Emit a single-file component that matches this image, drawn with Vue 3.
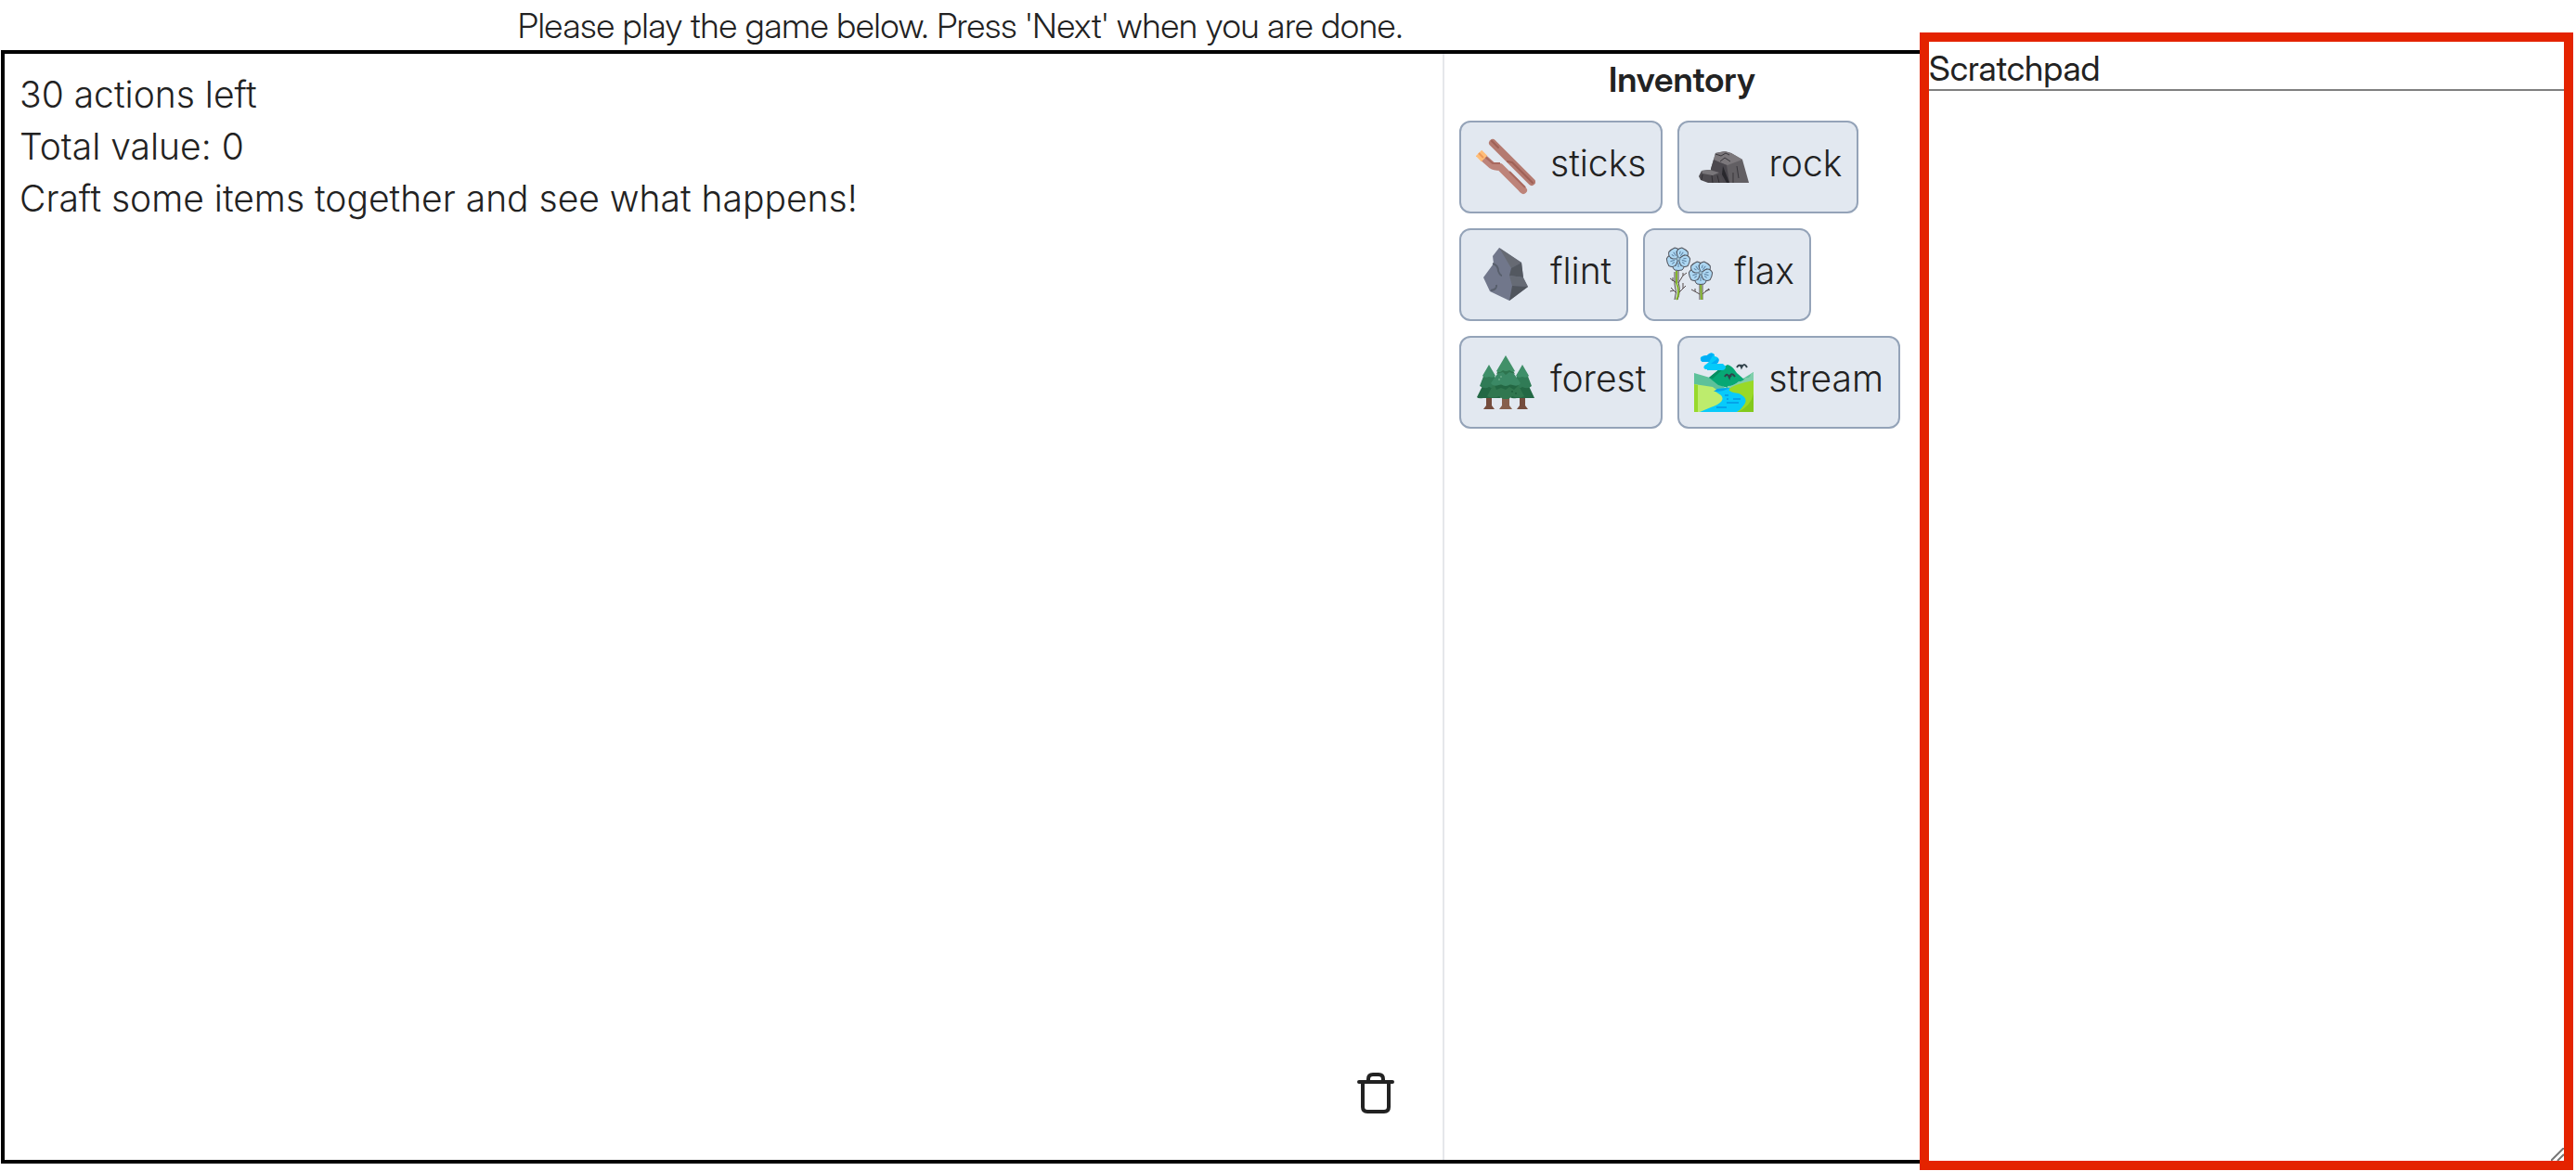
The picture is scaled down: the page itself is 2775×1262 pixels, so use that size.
<script setup>
import { ref } from 'vue'

const actionsLeft = ref(30)
const totalValue = ref(0)
const notes = ref('')
const items = ['sticks', 'rock', 'flint', 'flax', 'forest', 'stream']
const petals = [0, 72, 144, 216, 288]
</script>

<template>
  <div class="page">
    <main class="play">
      <p class="intro">Please play the game below. Press 'Next' when you are done.</p>
      <div class="game">
        <section class="canvas">
          <p>{{ actionsLeft }} actions left</p>
          <p>Total value: {{ totalValue }}</p>
          <p>Craft some items together and see what happens!</p>
          <button class="trash" type="button" aria-label="Discard item">
            <svg width="40" height="44" viewBox="0 0 40 44" fill="none" stroke="#222" stroke-width="4" stroke-linecap="round">
              <path d="M2 10H38M6 10V37Q6 42 11 42H29Q34 42 34 37V10M12 9V7Q12 2 17 2H23Q28 2 28 7V9" />
            </svg>
          </button>
        </section>
        <section class="inventory">
          <h2>Inventory</h2>
          <div class="items">
            <button v-for="item in items" :key="item" class="item" type="button">
              <svg class="icon" viewBox="0 0 64 64" aria-hidden="true">
                <g v-if="item === 'sticks'" fill="none" stroke-linejoin="round">
                  <path d="M18 6L60 48" stroke="#b47a70" stroke-width="8" stroke-linecap="round" />
                  <path d="M17 4L24 11M34 26L39 27L61 49" stroke="#9f6157" stroke-width="2" stroke-linecap="round" />
                  <path d="M8 22L17 30Q20 32 26 32L51 57" stroke="#bd8379" stroke-width="8" />
                  <path d="M50 56L51 57" stroke="#bd8379" stroke-width="8" stroke-linecap="round" />
                  <path d="M10 21L18 28H26M36 37L53 54" stroke="#a9695f" stroke-width="2" />
                  <path d="M3 17L9 23" stroke="#ffbd78" stroke-width="9" />
                  <path d="M3 17L8 22" stroke="#ed9a5c" stroke-width="2" />
                </g>
                <g v-else-if="item === 'rock'">
                  <path d="M16 49L18 34L23 17L33 15L40 17L52 24L59 49Z" fill="#625f63" />
                  <path d="M23 17L33 15L40 17L52 24L36 30L21 25Z" fill="#7b777b" />
                  <path d="M18 34L21 24L35 30L38 49H31L27 38L18 35Z" fill="#4b484e" />
                  <path d="M31 31L38 49H35L30 40Z" fill="#29282d" />
                  <path d="M23 18L29 20L34 17L38 19M28 26L33 22L39 26M46 31L48 44M42 38V49" fill="none" stroke="#38363b" stroke-width="1" />
                  <path d="M5 42L8 36L16 35L27 38L32 49H15L7 46Z" fill="#4e4b50" />
                  <path d="M8 36L16 35L27 38L20 41L9 39Z" fill="#79767a" />
                  <path d="M9 40L8 46M19 41L20 49M25 41L27 49" stroke="#302e33" stroke-width="1" />
                </g>
                <g v-else-if="item === 'flint'">
                  <path d="M25 3L49 19L51 36L56 45L36 60L15 50L8 35L19 20L18 12Z" fill="#71778b" />
                  <path d="M25 3L49 19L38 25Z" fill="#666a73" />
                  <path d="M38 25L49 19L51 35L36 33Z" fill="#535860" />
                  <path d="M36 33L51 35L56 45L39 44Z" fill="#666b75" />
                  <path d="M39 44L56 45L36 60Z" fill="#50555d" />
                  <path d="M18 20Q24 22 24 28Q26 33 28 33M22 43Q23 48 16 49" fill="none" stroke="#575e6b" stroke-width="2" />
                </g>
                <g v-else-if="item === 'flax'" fill="none">
                  <g stroke="#554a4b" stroke-width="1">
                    <path d="M20 28V40Q23 50 19 59M16 29V42Q19 51 16 59M43 41L43 59M46 42V59" />
                    <path d="M18 41L11 36M14 39V35M20 41L25 33L29 30M25 33V30M18 52L12 46M15 49L11 50M21 51L28 44M25 47V41M43 53L34 48M38 50V47M46 53L53 47M49 50L54 48" />
                  </g>
                  <path d="M18 28V41Q22 51 18 59M44 41L45 59" stroke="#83b52a" stroke-width="2" />
                  <g v-for="flower in [[20, 15], [44, 30]]" :key="flower[0]" :transform="`translate(${flower[0]} ${flower[1]})`">
                    <g v-for="angle in petals" :key="angle" :transform="`rotate(${angle})`">
                      <path d="M0 0L5 4Q8 8 4 12Q0 13 -4 12Q-8 8 -5 4Z" fill="#add7f2" stroke="#51545d" stroke-width="1" />
                      <path d="M-2 5L-3 8M0 4V9M2 5L3 8" stroke="#5d82a3" stroke-width="1" />
                    </g>
                    <circle r="2" fill="#9fbccc" stroke="#6788a0" stroke-width="1" />
                  </g>
                </g>
                <g v-else-if="item === 'forest'">
                  <path d="M11 48H17V57L20 61H8L11 57ZM47 48H53V57L56 61H44L47 57Z" fill="#754c3d" />
                  <g v-for="x in [0, 36]" :key="x" :transform="`translate(${x} 0)`">
                    <path d="M8 34L1 48Q2 50 8 49H27L20 34Z" fill="#236844" />
                    <path d="M9 23L4 36Q10 40 14 37Q20 40 24 36L19 23Z" fill="#307b56" />
                    <path d="M14 13L7 25Q9 28 14 26Q19 28 21 25Z" fill="#3f8f69" />
                  </g>
                  <path d="M28 47H36V57L39 61H25L28 57Z" fill="#87604c" />
                  <path d="M20 32L12 47Q18 50 25 47L29 50H35L39 47Q46 50 52 47L44 32Z" fill="#31774f" />
                  <path d="M20 35H46L41 40L36 37L32 40L27 38L22 40Z" fill="#236743" />
                  <path d="M25 20L16 33Q19 38 27 34Q32 38 37 34Q45 38 48 33L39 20Z" fill="#3b8965" />
                  <path d="M25 17L22 23L29 21L32 24L36 21L42 23L38 17Z" fill="#2e744e" />
                  <path d="M32 3L22 20Q25 23 29 19Q32 21 36 19Q40 22 42 20Z" fill="#419068" />
                  <circle cx="25" cy="29" r="1" fill="#6daa89" /><circle cx="27" cy="26" r="1" fill="#6daa89" />
                  <circle cx="39" cy="42" r="1" fill="#205e3d" /><circle cx="43" cy="44" r="1" fill="#205e3d" />
                </g>
                <g v-else>
                  <path d="M0 22L17 27L35 39L64 21V64H0Z" fill="#5dc19a" />
                  <path d="M16 27L27 18L36 13Q41 14 46 22L54 29L46 33L36 38L26 35Z" fill="#07a875" />
                  <path d="M16 27L27 18L33 16L20 28Z" fill="#078e60" />
                  <path d="M36 36Q43 36 48 31Q53 32 55 27Q61 28 61 23L64 21V36L35 45Z" fill="#81cfaa" />
                  <path d="M0 34L20 37L35 48L29 64H0Z" fill="#bdec6d" />
                  <path d="M0 34L4 35V64H0Z" fill="#98d92b" />
                  <path d="M36 40Q43 34 64 30V64H45Z" fill="#99d927" />
                  <path d="M64 44V64H47Q61 58 64 44Z" fill="#83c91c" />
                  <path d="M25 39L39 38Q34 42 48 44Q59 49 54 56Q51 61 46 64H6L18 59Q35 53 29 46L23 42Z" fill="#08cafa" />
                  <path d="M23 42Q32 42 38 38L25 39L21 42Z" fill="#05a3e9" />
                  <path d="M24 59H35M35 54H48M42 50H50M35 50H37M33 46H37" fill="none" stroke="#05a3e9" stroke-width="2" />
                  <path d="M14 18Q9 18 11 14Q14 12 16 10H9Q6 9 7 5Q9 3 14 3Q18-2 22 2L22 4Q28 5 26 10L24 12H31L34 15Q34 19 30 19H14Z" fill="#05cafa" />
                  <path d="M9 10Q6 8 8 5Q11 3 14 3Q18-1 21 2L19 5L16 10ZM26 6Q28 10 24 12H18Z" fill="#00aef6" />
                  <path d="M33 26Q35 22 37 25L38 27Q40 20 44 26M38 24L40 26M46 16Q49 11 51 16Q54 10 57 16M50 13L52 16" fill="none" stroke="#31424b" stroke-width="2" />
                </g>
              </svg>
              <span>{{ item }}</span>
            </button>
          </div>
        </section>
      </div>
    </main>
    <aside class="scratchpad">
      <label for="notes">Scratchpad</label>
      <textarea id="notes" v-model="notes"></textarea>
      <svg class="grip" viewBox="0 0 14 14" fill="none" stroke="#777" stroke-width="2" aria-hidden="true">
        <path d="M0 14L14 0M7 14L14 7" />
      </svg>
    </aside>
  </div>
</template>

<style>
body {
  margin: 0;
  background: #fff;
}
</style>

<style scoped>
.page {
  box-sizing: border-box;
  display: flex;
  min-height: 100vh;
  padding: 0 3px 0 1px;
  color: #222;
  font-family: Inter, "Liberation Sans", sans-serif;
  font-size: 39px;
  font-weight: 300;
  line-height: 56px;
}

p,
h2 {
  margin: 0;
}

.intro,
h2,
label {
  font-family: "Inter Display", Inter, "Liberation Sans", sans-serif;
  font-size: 37px;
}

.play {
  display: flex;
  flex: 1;
  flex-direction: column;
  min-width: 0;
  padding-bottom: 8px;
}

.intro {
  height: 54px;
  text-align: center;
}

.game {
  display: flex;
  flex: 1;
  border: 4px solid #000;
  border-right: 0;
}

.canvas {
  display: flex;
  flex: 1;
  flex-direction: column;
  padding: 16px;
}

.trash {
  align-self: flex-end;
  margin: auto 36px 34px 0;
  padding: 0;
  border: 0;
  background: none;
  line-height: 0;
}

.inventory {
  box-sizing: border-box;
  flex: 0 0 514px;
  padding: 0 16px;
  border-left: 2px solid #e5e7eb;
}

h2 {
  font-weight: 600;
  text-align: center;
}

.items {
  display: flex;
  flex-wrap: wrap;
  gap: 16px;
  padding-top: 16px;
}

.item {
  display: flex;
  align-items: center;
  gap: 16px;
  padding: 16px;
  border: 2px solid #94a3b8;
  border-radius: 12px;
  background: #e2e8f0;
  color: inherit;
  font: inherit;
}

.item span {
  padding-bottom: 8px;
}

.icon {
  width: 64px;
  height: 64px;
}

.scratchpad {
  position: relative;
  box-sizing: border-box;
  display: flex;
  flex: 0 0 704px;
  flex-direction: column;
  margin: 35px 0 1px;
  border: 10px solid #e42300;
}

label {
  padding-top: 7px;
  font-weight: 400;
  line-height: 44px;
}

textarea {
  box-sizing: border-box;
  flex: 1;
  width: 100%;
  padding: 8px;
  border: 0;
  border-top: 2px solid #808080;
  outline: 0;
  background: #fff;
  color: inherit;
  font: inherit;
  resize: none;
}

.grip {
  position: absolute;
  right: 0;
  bottom: 0;
  width: 14px;
  height: 14px;
}
</style>
